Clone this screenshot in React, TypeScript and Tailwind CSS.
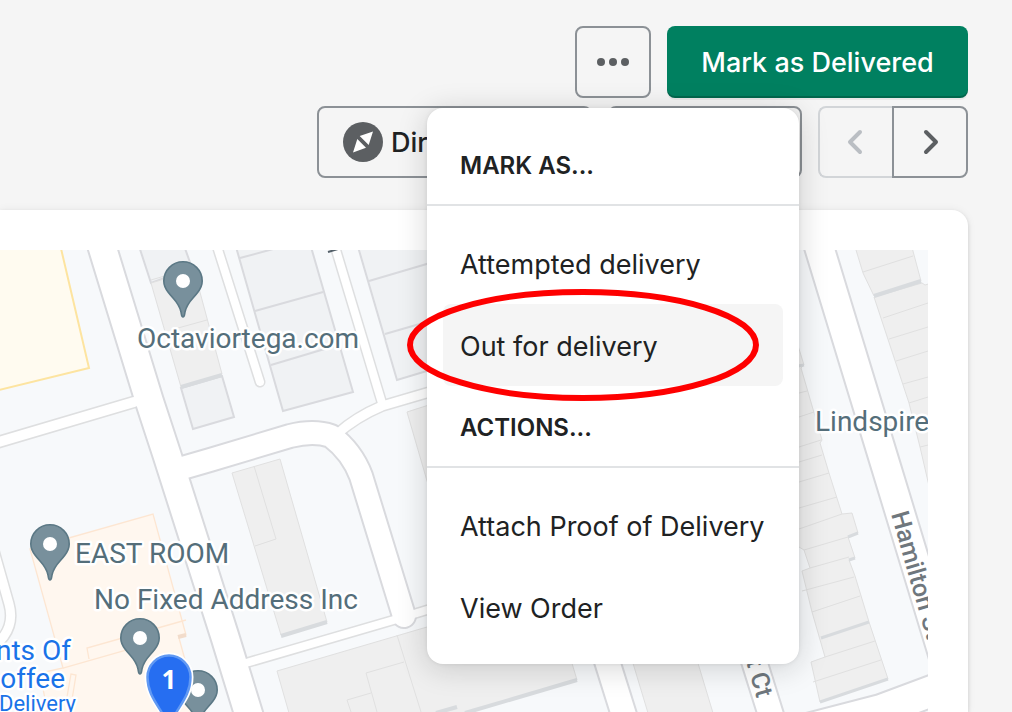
import React from "react";

type Pt = [number, number];

const toPoints = (pts: Pt[]) => pts.map((p) => p.join(",")).join(" ");

interface RoadProps {
  d: string;
  width: number;
  minor?: boolean;
}

const roads: RoadProps[] = [
  { d: "M-8 444 L134 402", width: 13, minor: true },
  { d: "M-12 530 L9 604 Q14 622 4 636 L-8 650", width: 12, minor: true },
  { d: "M215 240 L260 382", width: 11, minor: true },
  { d: "M333 240 L382 403", width: 11, minor: true },
  { d: "M337 434 Q356 417 382 406 L440 389", width: 12, minor: true },
  { d: "M246 663 L404 617 L440 606", width: 11, minor: true },
  { d: "M100 240 L149 400 L167 455 L225 637 L252 725", width: 31 },
  { d: "M172 471 L210 460 L290 436 Q314 430 331 436 Q352 452 361 476 L404 616", width: 26 },
  { d: "M602 645 L628 728", width: 28 },
  { d: "M749 645 L775 728", width: 28 },
  { d: "M817 240 L884 460 L946 664", width: 32 },
  { d: "M800 731 L881 710 L940 688", width: 34 },
];

const lots: Pt[][] = [
  [[137, 240], [182, 240], [192, 268], [151, 283]],
  [[181, 388], [222, 376], [234, 417], [193, 429]],
  [[234, 240], [309, 240], [353, 392], [283, 411]],
  [[356, 240], [460, 240], [460, 361], [397, 380]],
];

const buildings: Pt[][] = [
  [[151, 283], [194, 270], [222, 374], [181, 387]],
  [[407, 412], [460, 395], [460, 560], [450, 560]],
  [[232, 473], [280, 459], [327, 622], [281, 635]],
  [[277, 671], [427, 627], [565, 640], [577, 680], [465, 713], [289, 713]],
  [[629, 650], [694, 650], [713, 713], [648, 713]],
  [[853, 240], [910, 240], [921, 281], [874, 296], [863, 273]],
  [[874, 297], [922, 283], [925, 285], [935, 282], [935, 512], [920, 447], [909, 403]],
  [[790, 320], [804, 365], [801, 368], [822, 440], [820, 443], [829, 473], [842, 514], [852, 513],
    [858, 533], [848, 537], [855, 558], [849, 560], [855, 576], [869, 622], [888, 679], [820, 702],
    [811, 662], [825, 657], [812, 612], [802, 571], [810, 568], [804, 550], [799, 547], [780, 552]],
];

const buildingLines =
  "M151 280 L192 268 M178 328 L207 320 M254 466 L276 539 L255 546 M397 635 L421 712 M377 712 L366 673 L404 662 M371 693 L347 700 L351 712 " +
  "M863 272 L913 256 M883 318 L928 303 M889 339 L928 327 M896 361 L928 351 M903 384 L928 377 M909 403 L928 397 M920 447 L928 445 " +
  "M799 393 L807 391 M799 417 L814 412 M799 447 L821 440 M799 462 L822 455 M799 482 L829 473 M799 508 L837 497 M799 529 L842 514 M804 550 L848 537 M810 568 L849 557 M802 591 L854 577 M812 612 L860 596 M825 657 L875 641 M813 682 L881 660";

function Road({ d, width, minor }: RoadProps) {
  return <path d={d} strokeWidth={width} stroke={minor ? "#dedfe0" : "#d9dade"} />;
}

function Pin({ x, y }: { x: number; y: number }) {
  return (
    <g transform={`translate(${x} ${y})`}>
      <path
        d="M0 36 C-1.5 36 -1.5 34 -2 31 C-4 21 -10 18 -15 11 C-18 7 -19.200 3 -19.200 0 A19.200 19.200 0 0 1 19.200 0 C19.200 3 18 7 15 11 C10 18 4 21 2 31 C1.500 34 1.500 36 0 36Z"
        fill="#78909c"
        stroke="#5b7885"
        strokeWidth="1.6"
      />
      <circle r="7" fill="#fff" />
    </g>
  );
}

function DeliveryMap() {
  return (
    <svg
      role="img"
      aria-label="Delivery map"
      viewBox="0 250 928 462"
      preserveAspectRatio="xMaxYMin slice"
      className="block h-[462px] w-full font-[Roboto,sans-serif]"
    >
      <rect x="-500" y="240" width="1500" height="500" fill="#f7f9fb" />
      <polygon points="-5,240 59,240 89,368 -5,391" fill="#fffbf0" stroke="#fde4a0" strokeWidth="2" />

      <g fill="#fff7ef" stroke="#fde6d2" strokeWidth="1.3">
        <path d="M30 549 L153 514 L186 635 L179 638 L203 725 L50 725 L40 673 L63 668 Z" />
        <path d="M63 668 L140 646 M89 659 L87 648 L186 620 M67 697 L71 674 L76 675 L70 712" fill="none" />
      </g>
      <path d="M178 637 L186 635" stroke="#f2dccb" strokeWidth="4" />

      <g fill="#f0f2f4" stroke="#d9dade" strokeWidth="2">
        {lots.map((pts, i) => (
          <polygon key={i} points={toPoints(pts)} />
        ))}
        <path d="M240 258 L277 248 M255 311 L323 292 M271 365 L338 345 M369 281 L430 263 M385 334 L430 321" />
      </g>
      <g fill="#efefef" stroke="#e0e0e0" strokeWidth="1">
        {buildings.map((pts, i) => (
          <polygon key={i} points={toPoints(pts)} />
        ))}
        <path d={buildingLines} fill="none" />
      </g>
      <g stroke="#d8dbde" fill="none">
        <path
          d="M181 387 L222 375 M281 636 L327 622 M465 713 L577 680 M436 713 L457 707 M874 296 L921 281"
          strokeWidth="4"
        />
        <path
          d="M821 638 L869 622 M820 702 L888 679 M848 537 L858 533 M849 560 L855 558 M798 366 L804 365"
          strokeWidth="3"
        />
      </g>

      <g fill="none" strokeLinecap="round" strokeLinejoin="round">
        {roads.map((road) => (
          <Road key={road.d} {...road} />
        ))}
        {roads.map((road) => (
          <path key={road.d} d={road.d} strokeWidth={road.width - (road.minor ? 3 : 4)} stroke="#fff" />
        ))}
      </g>
      <path d="M328 252 L338 249" stroke="#546069" strokeWidth="2" />

      <g fill="#6f777d" fontSize="25" fontWeight="500" stroke="#fff" strokeWidth="4" paintOrder="stroke">
        <text transform="translate(891 514) rotate(74)">Hamilton St</text>
        <text transform="translate(746 661) rotate(74)">t Ct</text>
      </g>

      <Pin x={183} y={281} />
      <Pin x={50} y={544} />
      <Pin x={198} y={690} />
      <Pin x={140} y={638} />

      <g fontSize="28" fill="#546e7a" stroke="#fff" strokeWidth="5" strokeLinejoin="round" paintOrder="stroke">
        <text x="137" y="348">Octaviortega.com</text>
        <text x="75" y="563">EAST ROOM</text>
        <text x="94" y="609">No Fixed Address Inc</text>
        <text x="815" y="431">Lindspire</text>
        <g fill="#1a73e8" textAnchor="end">
          <text x="71" y="660">nts Of</text>
          <text x="65" y="688">offee</text>
          <text x="76" y="711" fontSize="22">Delivery</text>
        </g>
      </g>

      <g transform="translate(169 677)">
        <path
          d="M0 54 C-4 34 -23 24 -23 0 A23 23 0 0 1 23 0 C23 24 4 34 0 54Z"
          fill="#266ef1"
          stroke="#fff"
          strokeWidth="3"
        />
        <path
          d="M0 52 C-4 33 -21.500 23 -21.500 0 A21.500 21.500 0 0 1 21.500 0 C21.500 23 4 33 0 52Z"
          fill="#266ef1"
          stroke="#6199f3"
          strokeWidth="2.500"
        />
        <text y="12" textAnchor="middle" fill="#fff" className="font-['Noto_Sans',sans-serif] text-[26px] font-bold">
          1
        </text>
      </g>
    </svg>
  );
}

function MenuHeading({ children }: { children: React.ReactNode }) {
  return (
    <h2 className="border-b-2 border-[#e1e3e5] px-[33px] pt-1 pb-5 text-2xl leading-9 font-semibold">{children}</h2>
  );
}

function MenuItem({ children, active }: { children: React.ReactNode; active?: boolean }) {
  return (
    <li className="relative">
      <button
        type="button"
        className={`block h-[82px] w-full rounded-lg px-[17px] pt-1 text-left text-[27px] whitespace-nowrap ${active ? "bg-[#f5f5f5]" : ""}`}
      >
        {children}
      </button>
      {active && (
        <svg
          aria-hidden="true"
          viewBox="0 0 352 112"
          className="pointer-events-none absolute -top-[15px] -left-9 h-28 w-[352px]"
        >
          <ellipse cx="176" cy="56" rx="173" ry="53" fill="none" stroke="#fe0000" strokeWidth="6" />
        </svg>
      )}
    </li>
  );
}

function ActionMenu() {
  return (
    <div className="absolute top-[82px] left-1/2 z-10 w-[372px] -translate-x-1/2 rounded-2xl bg-white pt-9 pb-4 text-[#202223] shadow-[0_0_4px_rgba(23,24,24,0.08),0_4px_30px_rgba(23,24,24,0.18)]">
      <MenuHeading>MARK AS...</MenuHeading>
      <ul className="px-4 pt-4">
        <MenuItem>Attempted delivery</MenuItem>
        <MenuItem active>Out for delivery</MenuItem>
      </ul>
      <div className="pt-5">
        <MenuHeading>ACTIONS...</MenuHeading>
      </div>
      <ul className="px-4 pt-4">
        <MenuItem>Attach Proof of Delivery</MenuItem>
        <MenuItem>View Order</MenuItem>
      </ul>
    </div>
  );
}

export default function App() {
  return (
    <main className="flex min-h-screen flex-col overflow-hidden bg-[#f5f5f5] pt-[26px] font-[Inter,sans-serif] text-[28px] leading-10 text-[#202223]">
      <header className="flex flex-col gap-2 pr-11">
        <div className="flex justify-end gap-4">
          <div className="relative">
            <button
              type="button"
              aria-label="More actions"
              aria-expanded="true"
              className="flex h-[72px] w-[76px] items-center justify-center gap-1 rounded-lg border-2 border-[#8c9196]"
            >
              <span className="size-2 rounded-full bg-[#5c5f62]" />
              <span className="size-2 rounded-full bg-[#5c5f62]" />
              <span className="size-2 rounded-full bg-[#5c5f62]" />
            </button>
            <ActionMenu />
          </div>
          <button
            type="button"
            className="h-[72px] w-[301px] rounded-lg bg-[#008060] pt-[2px] text-[27px] font-medium whitespace-nowrap text-white shadow-[0_2px_0_rgba(0,0,0,0.05),inset_0_-2px_0_rgba(0,0,0,0.2)]"
          >
            Mark as Delivered
          </button>
        </div>
        <div className="flex justify-end gap-4">
          <button
            type="button"
            className="flex h-[72px] w-[275px] items-center gap-2 rounded-lg border-2 border-[#8c9196] px-6 text-[27px]"
          >
            <svg aria-hidden="true" viewBox="0 0 40 40" className="size-10 shrink-0">
              <circle cx="20" cy="20" r="20" fill="#5c5f62" />
              <path d="M30 9.500 L16.700 14 L25.700 23Z M10 30.500 L14.300 17 L23 25.700Z" fill="#fff" />
            </svg>
            <span className="pt-[2px] font-medium">Directions</span>
          </button>
          <button
            type="button"
            aria-label="More options"
            className="h-[72px] w-[194px] rounded-lg border-2 border-[#8c9196]"
          />
          <div className="flex h-[72px] w-[150px]">
            <button
              type="button"
              disabled
              aria-label="Previous"
              className="flex flex-1 items-center justify-center rounded-l-lg border-2 border-r-0 border-[#d2d5d8] pr-[2px]"
            >
              <svg aria-hidden="true" viewBox="0 0 40 40" className="size-10" fill="none" stroke="#babec3" strokeWidth="4" strokeLinecap="round" strokeLinejoin="round">
                <path d="M25 10 L15 20 L25 30" />
              </svg>
            </button>
            <button
              type="button"
              aria-label="Next"
              className="flex w-[76px] items-center justify-center rounded-r-lg border-2 border-[#8c9196]"
            >
              <svg aria-hidden="true" viewBox="0 0 40 40" className="size-10" fill="none" stroke="#5c5f62" strokeWidth="4" strokeLinecap="round" strokeLinejoin="round">
                <path d="M16 10 L26 20 L16 30" />
              </svg>
            </button>
          </div>
        </div>
      </header>
      <section className="mt-8 mr-11 flex-1 rounded-tr-2xl bg-white pt-10 pr-10 shadow-[0_0_10px_rgba(23,24,24,0.06),0_2px_4px_rgba(0,0,0,0.14)]">
        <DeliveryMap />
      </section>
    </main>
  );
}
